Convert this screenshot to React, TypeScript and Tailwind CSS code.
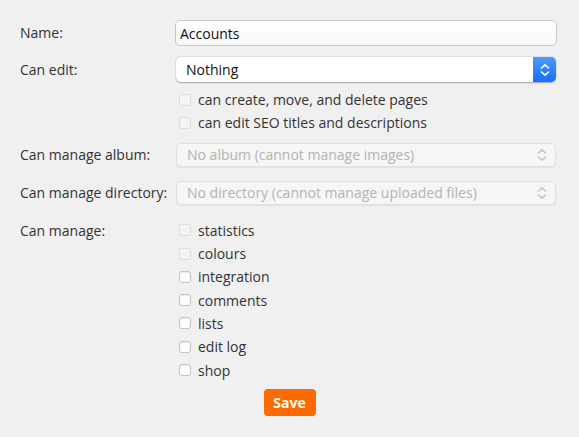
import React from 'react';

const Updown = ({ color }: { color: string }) => (
  <svg width="10" height="14" viewBox="0 0 10 14" fill="none" stroke={color} strokeWidth="1.6" strokeLinecap="round" strokeLinejoin="round">
    <path d="M1.5 5 L5 1.8 L8.5 5" />
    <path d="M1.5 9 L5 12.2 L8.5 9" />
  </svg>
);

const Box = ({ dim }: { dim?: boolean }) => (
  <span
    className={`inline-block w-[12px] h-[12px] rounded-[3px] border ${
      dim ? 'border-[#dcdcdc] bg-[#f4f4f4]' : 'border-[#c4c4c4] bg-white shadow-[inset_0_1px_1px_rgba(0,0,0,0.08)]'
    }`}
  />
);

const Check = ({ label, dim }: { label: string; dim?: boolean }) => (
  <div className="flex items-center h-[23.3px]">
    <span className="w-[23px] pl-[4px] flex items-center">
      <Box dim={dim} />
    </span>
    <span className="text-[#333]">{label}</span>
  </div>
);

const DisabledSelect = ({ text }: { text: string }) => (
  <div className="w-[380px] h-[24px] ml-[1px] rounded-[5px] border border-[#e0e0e0] bg-[#f6f6f6] shadow-[0_1px_1px_rgba(0,0,0,0.06)] flex items-center pl-[10px] pr-[8px]">
    <span className="flex-1 text-[#b3b3b3]">{text}</span>
    <Updown color="#c4c4c4" />
  </div>
);

export default function App() {
  const manage = ['statistics', 'colours', 'integration', 'comments', 'lists', 'edit log', 'shop'];
  return (
    <div
      className="w-[579px] h-[437px] bg-[#f0f0f0] text-[14px] text-[#333] pt-[20px]"
      style={{ fontFamily: '"Open Sans", "Noto Sans", sans-serif' }}
    >
      <div className="flex items-center">
        <div className="w-[175px] pl-[20px] -mt-[2px]">Name:</div>
        <div className="w-[382px] h-[26px] rounded-[5px] border border-[#c8c8c8] bg-[linear-gradient(#ffffff,#f7f7f7)] flex items-center pl-[4px] text-[#111]">
          Accounts
        </div>
      </div>

      <div className="flex items-center mt-[11px]">
        <div className="w-[175px] pl-[20px]">Can edit:</div>
        <div className="w-[380px] h-[25px] ml-[1px] rounded-[5px] bg-white shadow-[0_0.5px_1.5px_rgba(0,0,0,0.35)] flex overflow-hidden">
          <span className="flex-1 flex items-center pl-[10px] text-[#111]">Nothing</span>
          <span className="w-[23px] bg-[linear-gradient(#4a9bff,#1a6dff)] flex items-center justify-center">
            <Updown color="#ffffff" />
          </span>
        </div>
      </div>

      <div className="ml-[175px] mt-[6px]">
        <Check label="can create, move, and delete pages" dim />
        <Check label="can edit SEO titles and descriptions" dim />
      </div>

      <div className="flex items-center mt-[8px]">
        <div className="w-[175px] pl-[20px]">Can manage album:</div>
        <DisabledSelect text="No album (cannot manage images)" />
      </div>

      <div className="flex items-center mt-[14px]">
        <div className="w-[175px] pl-[20px]">Can manage directory:</div>
        <DisabledSelect text="No directory (cannot manage uploaded files)" />
      </div>

      <div className="flex mt-[14px]">
        <div className="w-[175px] pl-[20px] h-[23.3px] flex items-center">Can manage:</div>
        <div>
          {manage.map((m, i) => (
            <Check key={m} label={m} dim={i < 2} />
          ))}
        </div>
      </div>

      <div className="flex justify-center mt-[7px]">
        <button className="w-[52px] h-[27px] rounded-[4px] bg-[#ff6a00] text-white font-bold text-[14px]">
          Save
        </button>
      </div>
    </div>
  );
}
